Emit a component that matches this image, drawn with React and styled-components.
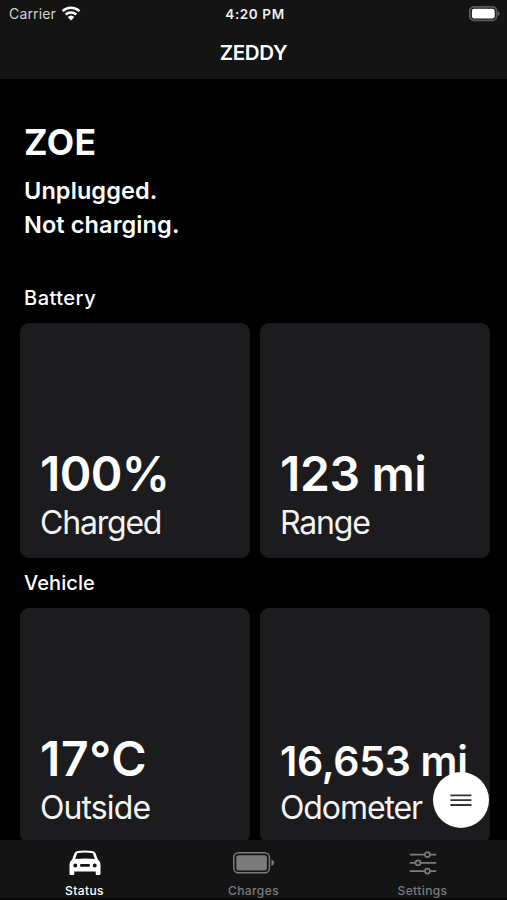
import React from "react";
import styled, { createGlobalStyle } from "styled-components";

const colors = {
  black: "#000",
  white: "#fff",
  bar: "#141414",
  card: "#1c1c1e",
  muted: "#7b7b7b",
};

const GlobalStyle = createGlobalStyle`
  body {
    margin: 0;
    background: ${colors.black};
    color: ${colors.white};
    font-family: Inter, "Liberation Sans", sans-serif;
  }
  * {
    box-sizing: border-box;
  }
`;

const sections = [
  {
    title: "Battery",
    spacing: 0.5,
    cards: [
      { value: "100%", label: "Charged", spacing: -0.6, labelSpacing: -1.2 },
      { value: "123 mi", label: "Range", spacing: -0.35, labelSpacing: -1.2 },
    ],
  },
  {
    title: "Vehicle",
    spacing: 0.1,
    cards: [
      { value: "17°C", label: "Outside", spacing: 0.7, labelSpacing: -0.9 },
      {
        value: "16,653 mi",
        label: "Odometer",
        size: 41,
        spacing: -0.3,
        labelSpacing: -1.1,
      },
    ],
  },
];

const WifiIcon = () => (
  <svg width="20" height="15" viewBox="0 0 20 15">
    <g fill="none" stroke="#fff" strokeWidth="2.5">
      <path d="M1.6 5.2a12.1 12.1 0 0 1 16.8 0" />
      <path d="M4.7 8.5a7.7 7.7 0 0 1 10.6 0" />
    </g>
    <path d="M6.7 11a4.8 4.8 0 0 1 6.6 0L10 14.4z" fill="#fff" />
  </svg>
);

const PowerIcon = () => (
  <svg width="32" height="16" viewBox="0 0 32 16">
    <rect x="0.8" y="0.8" width="26.8" height="13.6" rx="4.2" fill="none" stroke="#5c5c5c" strokeWidth="1.7" />
    <rect x="2.9" y="2.8" width="22.8" height="9.6" rx="2.2" fill="#fff" />
    <path d="M28.8 5.2a2.5 2.5 0 0 1 0 4.8z" fill="#686868" />
  </svg>
);

const CarIcon = () => (
  <svg width="32" height="26" viewBox="0 0 32 26">
    <path
      fillRule="evenodd"
      fill="currentColor"
      d="M8.7.9Q16 .1 23.3.9q2.3.3 3.2 2.4l2.4 6.1q2.6 2.1 2.6 5.1v9.3q0 1.2-1.2 1.2h-2.4q-1.2 0-1.2-1.2v-2.3H5.3v2.3Q5.3 25 4.1 25H1.7Q.5 25 .5 23.8v-9.3q0-3 2.6-5.1l2.4-6.1Q6.4 1.2 8.7.9zM9.4 2.9q-1.1.1-1.5 1.2L6.2 8.9Q16 8.1 25.8 8.9l-1.7-4.8q-.4-1.1-1.5-1.2-6.6-.6-13.2 0zM6.3 13.4a2 2 0 1 0 0 4 2 2 0 0 0 0-4zm19.4 0a2 2 0 1 0 0 4 2 2 0 0 0 0-4zM12.3 14.1a1.3 1.3 0 0 0 0 2.6h7.4a1.3 1.3 0 0 0 0-2.6z"
    />
  </svg>
);

const ChargesIcon = () => (
  <svg width="42" height="22" viewBox="0 0 42 22">
    <rect x="0.8" y="0.8" width="35.6" height="20" rx="4.6" fill="none" stroke="currentColor" strokeWidth="1.5" />
    <rect x="3.3" y="3.2" width="30.6" height="15.2" rx="2.5" fill="currentColor" />
    <path d="M38.4 7.6q2.8 1 2.8 3.2t-2.8 3.2z" fill="currentColor" />
  </svg>
);

const SettingsIcon = () => (
  <svg width="28" height="24" viewBox="0 0 28 24">
    <g stroke="currentColor" strokeWidth="1.7" fill="none">
      <path d="M.8 3.6h15M21 3.6h6.2M.8 11.8h5.6M11.6 11.8h15.6M.8 20.1h15M21 20.1h6.2" />
      <circle cx="18.4" cy="3.6" r="2.5" />
      <circle cx="9" cy="11.8" r="2.5" />
      <circle cx="18.4" cy="20.1" r="2.5" />
    </g>
  </svg>
);

const MenuIcon = () => (
  <svg width="22" height="14" viewBox="0 0 22 14">
    <path d="M.4 2.4h21M.4 7.2h21M.4 12h21" stroke="#333" strokeWidth="1.8" />
  </svg>
);

const tabs = [
  { name: "Status", icon: <CarIcon />, active: true },
  { name: "Charges", icon: <ChargesIcon /> },
  { name: "Settings", icon: <SettingsIcon /> },
];

const App = () => {
  return (
    <>
      <GlobalStyle />
      <Screen>
        <Header>
          <StatusBar>
            <Carrier>
              Carrier
              <WifiIcon />
            </Carrier>
            <Time>4:20 PM</Time>
            <Power>
              <PowerIcon />
            </Power>
          </StatusBar>
          <NavTitle>ZEDDY</NavTitle>
        </Header>
        <Content>
          <Summary>
            <CarName>ZOE</CarName>
            <CarState>Unplugged.</CarState>
            <CarState>Not charging.</CarState>
          </Summary>
          {sections.map((section) => (
            <section key={section.title}>
              <SectionTitle $spacing={section.spacing}>
                {section.title}
              </SectionTitle>
              <CardGrid>
                {section.cards.map((card) => (
                  <Card key={card.label}>
                    <CardValue $size={card.size} $spacing={card.spacing}>
                      {card.value}
                    </CardValue>
                    <CardLabel $spacing={card.labelSpacing}>
                      {card.label}
                    </CardLabel>
                  </Card>
                ))}
              </CardGrid>
            </section>
          ))}
        </Content>
        <TabBar>
          {tabs.map((tab) => (
            <Tab key={tab.name} $active={tab.active}>
              <TabIcon>{tab.icon}</TabIcon>
              <TabName>{tab.name}</TabName>
            </Tab>
          ))}
        </TabBar>
        <MenuButton aria-label="Menu">
          <MenuIcon />
        </MenuButton>
      </Screen>
    </>
  );
};

const Screen = styled.div`
  position: relative;
  display: flex;
  flex-direction: column;
  height: 900px;
  overflow: hidden;
`;

const Header = styled.header`
  flex: none;
  height: 79px;
  background: ${colors.bar};
`;

const StatusBar = styled.div`
  display: grid;
  grid-template-columns: 1fr auto 1fr;
  align-items: center;
  height: 27px;
  padding: 0 6px 0 9px;
`;

const Carrier = styled.div`
  display: flex;
  align-items: center;
  gap: 5px;
  font-size: 14px;
  letter-spacing: 0.15px;
  color: #d2d2d2;
`;

const Time = styled.div`
  font-size: 13.5px;
  font-weight: 600;
  letter-spacing: 0.6px;
  color: #eee;
`;

const Power = styled.div`
  display: flex;
  justify-content: flex-end;
`;

const NavTitle = styled.h1`
  margin: 0;
  font-size: 20.5px;
  font-weight: 600;
  line-height: 51px;
  letter-spacing: -0.3px;
  text-align: center;
`;

const Content = styled.main`
  flex: 1;
  min-height: 0;
  overflow: hidden;
  padding: 40px 17px 0 20px;
`;

const Summary = styled.div`
  height: 154px;
  padding-left: 4px;
`;

const CarName = styled.h2`
  margin: 0 0 8px;
  font-size: 35.5px;
  font-weight: 700;
  line-height: 47px;
  letter-spacing: 0.4px;
`;

const CarState = styled.p`
  margin: 0;
  font-size: 23.5px;
  font-weight: 600;
  line-height: 34px;
  letter-spacing: 0.1px;
`;

const SectionTitle = styled.h3`
  height: 50px;
  margin: 0;
  padding-left: 4px;
  font-size: 20px;
  font-weight: 550;
  line-height: 51px;
  letter-spacing: ${(props) => props.$spacing}px;
`;

const CardGrid = styled.div`
  display: grid;
  grid-template-columns: 1fr 1fr;
  gap: 10px;
`;

const Card = styled.div`
  display: flex;
  flex-direction: column;
  justify-content: flex-end;
  height: 235px;
  padding: 0 0 14px 20px;
  border-radius: 9px;
  background: ${colors.card};
  white-space: nowrap;
`;

const CardValue = styled.div`
  font-size: ${(props) => props.$size || 48}px;
  font-weight: 600;
  line-height: ${(props) => (props.$size ? 51 : 57)}px;
  letter-spacing: ${(props) => props.$spacing}px;
`;

const CardLabel = styled.div`
  font-size: 32px;
  font-weight: 400;
  line-height: 42px;
  letter-spacing: ${(props) => props.$spacing}px;
  color: #f4f4f4;
`;

const TabBar = styled.nav`
  display: grid;
  grid-template-columns: repeat(3, 1fr);
  flex: none;
  height: 60px;
  border-bottom: 2px solid #070707;
  background: ${colors.bar};
`;

const Tab = styled.div`
  display: flex;
  flex-direction: column;
  align-items: center;
  color: ${(props) => (props.$active ? colors.white : colors.muted)};
`;

const TabIcon = styled.div`
  display: flex;
  align-items: center;
  height: 42px;
  padding-top: 4px;
`;

const TabName = styled.span`
  font-size: 12px;
  font-weight: 500;
  line-height: 17px;
  letter-spacing: 0.4px;
`;

const MenuButton = styled.button`
  position: absolute;
  right: 18px;
  bottom: 72px;
  display: flex;
  align-items: center;
  justify-content: center;
  width: 56px;
  height: 56px;
  padding: 0;
  border: 0;
  border-radius: 50%;
  background: ${colors.white};
`;

export default App;
